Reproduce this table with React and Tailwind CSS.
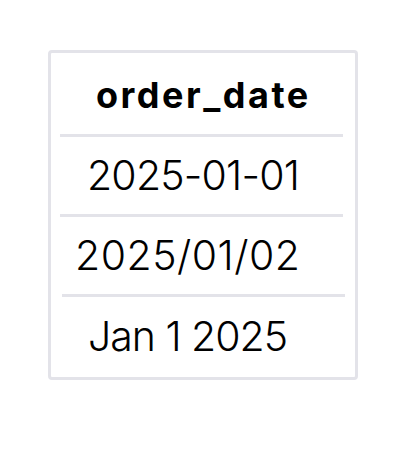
export default function App() {
  const font = { fontFamily: "Inter, 'Noto Sans', sans-serif" };
  return (
    <div className="w-[409px] h-[452px] bg-white pt-[50px] pl-[48px]" style={font}>
      <div className="w-[310px] h-[330px] border-[3px] border-[#e3e3e9] rounded-[4px] pl-[9px] pr-[12px] flex flex-col text-black">
        <div className="h-[81px] flex items-center pl-[36px] pt-[2px] text-[36px] font-bold tracking-[2.5px]">order_date</div>
        <div className="h-[3px] bg-[#e3e3e9]" />
        <div className="h-[77px] flex items-center pl-[27px] text-[41px] font-light tracking-[-0.8px]">2025-01-01</div>
        <div className="h-[3px] bg-[#e3e3e9]" />
        <div className="h-[77px] flex items-center pl-[15px] text-[41px] font-light tracking-[0.5px]">2025/01/02</div>
        <div className="h-[3px] bg-[#e3e3e9] ml-[2px] -mr-[2px]" />
        <div className="flex-1 flex items-center pl-[28px] text-[41px] font-light tracking-[-1px]">Jan 1 2025</div>
      </div>
    </div>
  );
}
